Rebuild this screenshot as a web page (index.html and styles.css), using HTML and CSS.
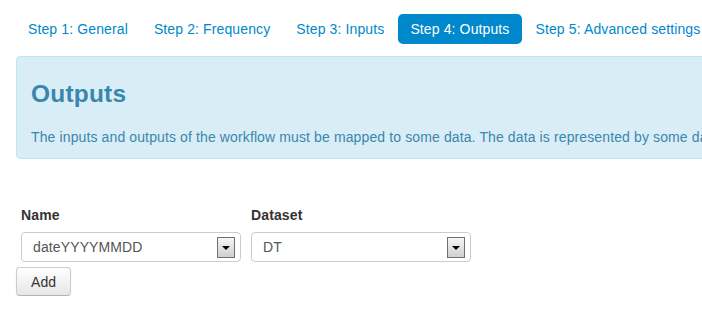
FILE: index.html
```html
<!DOCTYPE html>
<html lang="en">
    <head>
        <meta charset="UTF-8">
        <title>Workflow - Outputs</title>
        <link rel="stylesheet" href="styles.css">
    </head>
    <body>
        <div class="container">
            <ul class="nav-pills">
                <li><a href="#">Step 1: General</a></li>
                <li><a href="#">Step 2: Frequency</a></li>
                <li><a href="#">Step 3: Inputs</a></li>
                <li class="active"><a href="#">Step 4: Outputs</a></li>
                <li><a href="#">Step 5: Advanced settings</a></li>
            </ul>

            <div class="alert-info">
                <h3>Outputs</h3>
                <p>The inputs and outputs of the workflow must be mapped to some data. The data is represented by some dataset.</p>
            </div>

            <form class="outputs-form">
                <div class="fields">
                    <div class="field">
                        <label>Name</label>
                        <div class="select-wrap">
                            <select name="name">
                                <option>dateYYYYMMDD</option>
                            </select>
                            <span class="select-arrow"></span>
                        </div>
                    </div>
                    <div class="field">
                        <label>Dataset</label>
                        <div class="select-wrap">
                            <select name="dataset">
                                <option>DT</option>
                            </select>
                            <span class="select-arrow"></span>
                        </div>
                    </div>
                </div>
                <button type="button" class="btn">Add</button>
            </form>
        </div>
    </body>
</html>
```

FILE: styles.css
```css
html {
    overflow: hidden;
}

body {
    margin: 0;
    font-family: "Liberation Sans", Arial, sans-serif;
    font-size: 14px;
    line-height: 20px;
    letter-spacing: 0.12px;
    color: #333;
}

.container {
    width: 940px;
    padding: 0 16px;
}

/* pills */

.nav-pills {
    list-style: none;
    margin: 12px 0 10px 0;
    padding: 0;
    display: flex;
}

.nav-pills li {
    margin: 2px 2px 2px 0;
}

.nav-pills a {
    display: block;
    padding: 8px 12px;
    line-height: 14px;
    border-radius: 5px;
    color: #0088cc;
    text-decoration: none;
    white-space: nowrap;
}

.nav-pills .active a {
    background-color: #0088cc;
    color: #fff;
}

/* alert */

.alert-info {
    background-color: #d9edf7;
    border: 1px solid #bce8f1;
    border-radius: 4px;
    color: #3a87ad;
    padding: 8px 35px 11px 14px;
}

.alert-info h3 {
    margin: 9px 0 13px 0;
    font-size: 24.5px;
    line-height: 40px;
    font-weight: bold;
    letter-spacing: 0.2px;
}

.alert-info p {
    margin: 0;
    white-space: nowrap;
}

/* form */

.outputs-form {
    margin-top: 46px;
}

.fields {
    display: flex;
    gap: 10px;
    padding-left: 5px;
}

.field label {
    display: block;
    font-weight: bold;
    margin-bottom: 7px;
}

.select-wrap {
    position: relative;
    width: 220px;
}

.select-wrap select {
    appearance: none;
    -webkit-appearance: none;
    display: block;
    width: 220px;
    height: 30px;
    padding: 0 11px;
    border: 1px solid #ccc;
    border-radius: 4px;
    background: #fff;
    color: #555;
    font-family: inherit;
    font-size: 14px;
    letter-spacing: inherit;
}

.select-arrow {
    position: absolute;
    top: 5px;
    right: 6px;
    width: 16px;
    height: 19px;
    border: 1px solid #707070;
    background: linear-gradient(#f6f6f6, #cfcfcf);
    pointer-events: none;
}

.select-arrow::after {
    content: "";
    position: absolute;
    left: 4px;
    top: 8px;
    border-left: 4px solid transparent;
    border-right: 4px solid transparent;
    border-top: 4px solid #000;
}

.btn {
    display: block;
    margin-top: 5px;
    height: 29px;
    padding: 3px 14px;
    font-family: inherit;
    font-size: 14px;
    line-height: 20px;
    letter-spacing: inherit;
    color: #333;
    background: linear-gradient(#fff, #e6e6e6);
    border: 1px solid #ccc;
    border-bottom-color: #b3b3b3;
    border-radius: 4px;
    box-shadow: inset 0 1px 0 rgba(255, 255, 255, .2), 0 1px 2px rgba(0, 0, 0, .05);
}
```
